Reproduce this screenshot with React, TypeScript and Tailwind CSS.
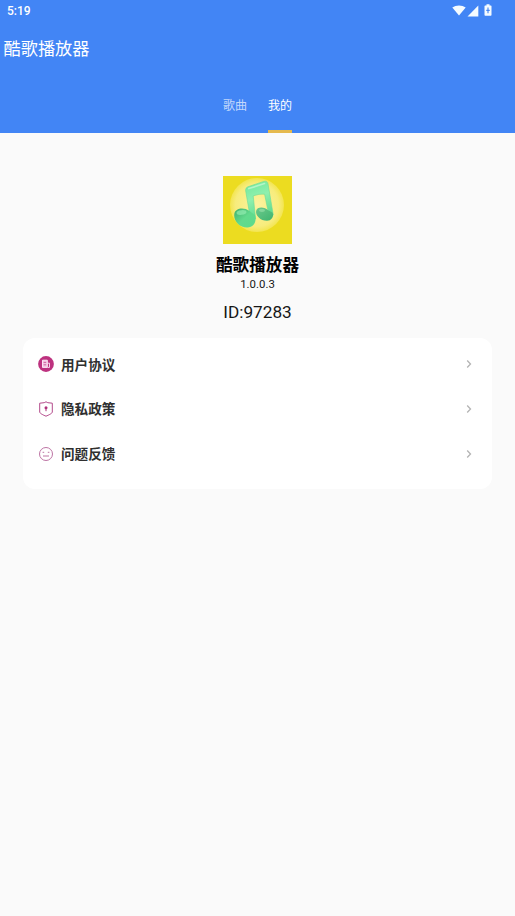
import type { ReactNode } from 'react'

const tabs = [
  { label: '歌曲', active: false },
  { label: '我的', active: true },
]

function StatusIcons() {
  return (
    <div className="flex items-center text-[#f4fbff]">
      <svg viewBox="0 0 14 11" className="h-[11px] w-[14px]" fill="currentColor">
        <path d="M7 10.6 0.3 2.6C2.2 1.1 4.5.4 7 .4s4.800.7 6.700 2.200Z" />
      </svg>
      <svg viewBox="0 0 12 12" className="ml-px h-3 w-3" fill="currentColor">
        <path d="M11.300.5v11H.5Z" />
      </svg>
      <svg viewBox="0 0 8 12" className="mb-px ml-[5px] h-3 w-2">
        <path d="M2.500.3h3v1.200h1.300c.4 0 .7.3.7.7v8.800c0 .4-.3.7-.7.7H1.200a.7.7 0 0 1-.7-.7V2.200c0-.4.3-.7.7-.7h1.300Z" fill="currentColor" />
        <path d="M4 3.600v5.600M2.300 6.400h3.400" stroke="#4285f5" strokeWidth="1.100" />
      </svg>
    </div>
  )
}

function MusicLogo() {
  return (
    <svg viewBox="0 0 69 68" className="h-[68px] w-[69px]">
      <defs>
        <radialGradient id="glow">
          <stop offset="0" stopColor="#fbf3a0" />
          <stop offset="0.8" stopColor="#f7ec7c" />
          <stop offset="1" stopColor="#f3e550" />
        </radialGradient>
        <linearGradient id="note" x1="0" y1="0" x2="0.3" y2="1">
          <stop offset="0" stopColor="#6fe79c" />
          <stop offset="0.5" stopColor="#8ff0ae" />
          <stop offset="1" stopColor="#62dc90" />
        </linearGradient>
        <linearGradient id="head" x1="0" y1="0" x2="1" y2="1">
          <stop offset="0" stopColor="#3fae6c" />
          <stop offset="0.5" stopColor="#62da8d" />
          <stop offset="1" stopColor="#5bdb8c" />
        </linearGradient>
        <linearGradient id="smallHead" x1="0" y1="0" x2="1" y2="1">
          <stop offset="0" stopColor="#6cc98c" />
          <stop offset="1" stopColor="#3fb46f" />
        </linearGradient>
      </defs>
      <rect width="69" height="68" fill="#ecdc20" />
      <circle cx="34" cy="29" r="27" fill="url(#glow)" />
      <path
        d="M22.600 14.500Q22.300 11.800 24.800 10.800L40.800 5.400Q44.400 4.400 45 7.800L50.300 39 45.800 39 41.600 18.200Q36 17.600 30.200 19.900L32.600 43 27.500 43Z"
        fill="url(#note)"
        stroke="#6bdc95"
        strokeWidth="0.6"
        strokeLinejoin="round"
      />
      <path d="M25.800 12.600 41.500 7.600" stroke="#b4f5c8" strokeWidth="1.600" strokeLinecap="round" />
      <path
        d="M11.300 38C12 32 21 30.800 26.500 35L32 39C34 46 30.500 51.300 24.500 51.500 17 51.800 10.300 45 11.300 38Z"
        fill="url(#head)"
      />
      <path
        d="M33.100 35C33.800 30.500 41.500 30.500 45.500 34.500L49.500 36.500C51.500 41 48 44.800 44 44.800 37.500 44.800 32.300 39.500 33.100 35Z"
        fill="url(#smallHead)"
      />
      <ellipse cx="18.500" cy="36.500" rx="5" ry="2.300" fill="#93ecb0" opacity="0.7" transform="rotate(-6 18.500 36.500)" />
      <ellipse cx="39" cy="34.500" rx="3" ry="1.400" fill="#9ce3ae" opacity="0.6" />
    </svg>
  )
}

function AgreementIcon() {
  return (
    <svg viewBox="0 0 16 16" className="h-4 w-4" fill="none">
      <circle cx="8" cy="8" r="7.900" fill="#bd327f" />
      <path d="M4.500 4.200h4.800v7.200h-4.800Z" fill="#f3c6e2" stroke="#fbe6f5" strokeWidth="1" />
      <path d="M9.500 7.200h2v4.200h-2" stroke="#fbe6f5" strokeWidth="0.9" />
      <path d="M5.600 6.400h2.600M5.600 8.800h2.600" stroke="#c9579a" strokeWidth="0.9" />
    </svg>
  )
}

function PrivacyIcon() {
  return (
    <svg viewBox="0 0 16 16" className="h-4 w-4" fill="none">
      <path
        d="M8 .8 9.800 1.700 14.300 2.200v8.800c0 1.400-3.500 3-6.300 4.200-2.800-1.200-6.300-2.800-6.300-4.200V2.200l4.500-.5Z"
        stroke="#b34a8b"
        strokeWidth="1"
        strokeLinejoin="round"
      />
      <circle cx="8" cy="6.700" r="1.500" fill="#b0337c" />
      <path d="M8 7v3.200" stroke="#b0337c" strokeWidth="1" />
    </svg>
  )
}

function FeedbackIcon() {
  return (
    <svg viewBox="0 0 16 16" className="h-4 w-4" fill="none" stroke="#b5649a" strokeWidth="0.9">
      <circle cx="8" cy="8" r="6.500" />
      <path d="M4.600 6.300h1.600M9.800 6.300h1.600M5 10h6" />
    </svg>
  )
}

function MenuRow({ icon, label }: { icon: ReactNode; label: string }) {
  return (
    <div className="flex h-[44.700px] items-center pr-5 pl-[15px]">
      {icon}
      <span className="ml-[7px] pt-px text-[13.600px] font-bold text-[#303030]">{label}</span>
      <svg viewBox="0 0 6 10" className="ml-auto h-[10px] w-[6px]" fill="none">
        <path d="M1.200 1.500 4.500 5 1.200 8.500" stroke="#b4b4b4" strokeWidth="1.300" />
      </svg>
    </div>
  )
}

export default function App() {
  return (
    <div className="min-h-screen bg-[#fafafa] font-[Roboto,'Noto_Sans_CJK_SC',sans-serif]">
      <header className="flex h-[133px] flex-col bg-[#4285f5] text-white">
        {/* System status bar */}
        <div className="flex h-[21px] items-center justify-between pr-[23px] pl-[7px]">
          <span className="text-[12px] font-medium">5:19</span>
          <StatusIcons />
        </div>

        <h1 className="mt-[15px] pl-[3.500px] text-[17.200px] leading-[26px]">酷歌播放器</h1>

        <nav className="mt-auto flex justify-center gap-[21px]">
          {tabs.map((tab) => (
            <div key={tab.label} className="flex flex-col items-center">
              <span className={tab.active ? 'text-xs text-white' : 'text-xs text-white/70'}>{tab.label}</span>
              <span className={tab.active ? 'mt-4 h-[3px] w-6 bg-[#e5b94e]' : 'mt-4 h-[3px] w-6'} />
            </div>
          ))}
        </nav>
      </header>

      <main className="px-[23px] pt-[43px]">
        {/* App identity */}
        <section className="flex flex-col items-center text-[#161616]">
          <MusicLogo />
          <h2 className="mt-[10px] text-[16.600px] leading-6 font-bold text-black">酷歌播放器</h2>
          <p className="-mt-[2px] text-[11.400px] leading-4">1.0.0.3</p>
          <p className="mt-2 text-[17.200px] leading-6">ID:97283</p>
        </section>

        {/* Menu */}
        <section className="mt-[14px] h-[151px] rounded-xl bg-white pt-1">
          <MenuRow icon={<AgreementIcon />} label="用户协议" />
          <MenuRow icon={<PrivacyIcon />} label="隐私政策" />
          <MenuRow icon={<FeedbackIcon />} label="问题反馈" />
        </section>
      </main>
    </div>
  )
}
